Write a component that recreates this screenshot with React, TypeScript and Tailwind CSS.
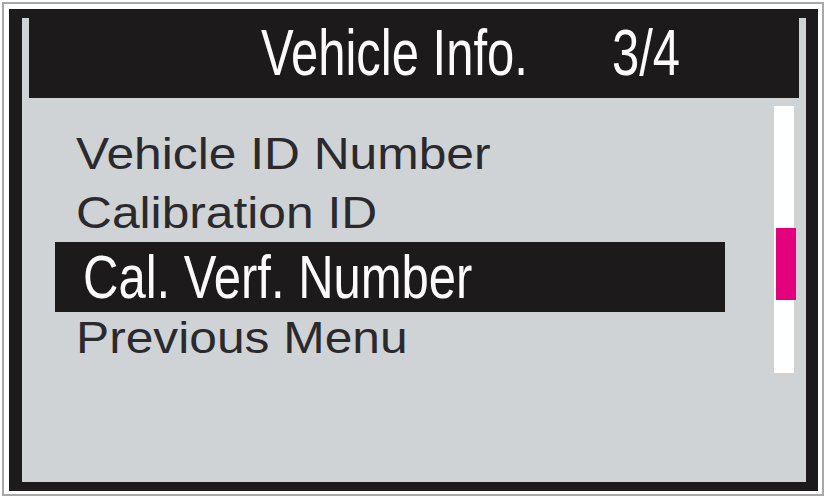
const rows = [
  { label: 'Vehicle ID Number', h: 'h-[59px] leading-[59px]' },
  { label: 'Calibration ID', h: 'h-[59px] leading-[59px]' },
  { label: 'Cal. Verf. Number', selected: true },
  { label: 'Previous Menu', h: 'h-[51px] leading-[51px]' },
];

function MenuRow({ label, selected, h }: { label: string; selected?: boolean; h?: string }) {
  if (selected) {
    return (
      <div className="h-[70px] bg-[#1d1a1b] flex items-center pl-[28px]">
        <span className="inline-block leading-none text-[49px] text-[#fbfbfb] scale-y-[1.25] whitespace-nowrap">
          {label}
        </span>
      </div>
    );
  }
  return (
    <div className={`${h} pl-[21px] text-[44px] text-[#2a2a2e] whitespace-nowrap`}>
      <span className="inline-block origin-left scale-x-[1.13]">{label}</span>
    </div>
  );
}

export default function App() {
  return (
    <div className="w-[826px] h-[498px] bg-white p-[2px] font-['Liberation_Sans',Arial,sans-serif]">
      <div className="h-full border-2 border-[#a8a8a8] pt-[5px] pl-[5px] pr-[4px] pb-[3px]">
        <div className="h-full bg-[#1d1a1b] pt-[9px] pl-[13px] pr-[12px] pb-[9px]">
          <div className="h-full bg-[#d0d3d5] flex flex-col">
            <div className="mx-[7px] h-[80px] shrink-0 bg-[#1d1a1b] flex items-center pb-[10px] pl-[232px] text-[49px] text-[#fbfbfb] leading-none">
              <span className="inline-block scale-y-[1.31]">Vehicle Info.</span>
              <span className="inline-block scale-y-[1.31] ml-[84px]">3/4</span>
            </div>
            <div className="flex flex-1 items-start">
              <div className="ml-[33px] w-[670px] pt-[26px]">
                {rows.map((r) => (
                  <MenuRow key={r.label} {...r} />
                ))}
              </div>
              <div className="relative ml-[49px] mt-[8px] w-[20px] h-[267px] bg-white">
                <div className="absolute left-[2px] top-[122px] w-[20px] h-[72px] bg-[#e4007c]" />
              </div>
            </div>
          </div>
        </div>
      </div>
    </div>
  );
}
